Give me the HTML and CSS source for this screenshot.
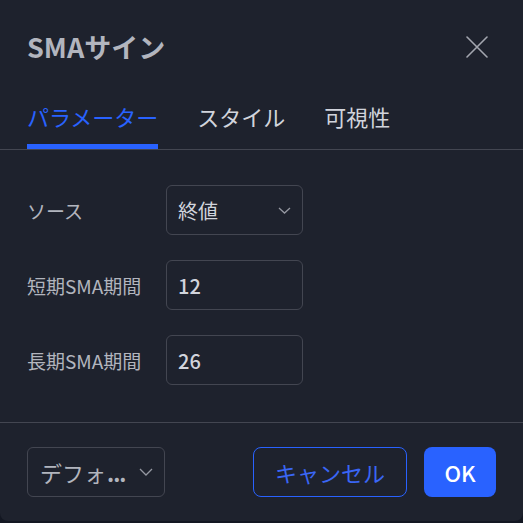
FILE: index.html
```html
<!DOCTYPE html>
<html lang="ja">
<head>
<meta charset="utf-8">
<link rel="stylesheet" href="styles.css">
</head>
<body>
<div class="dialog">
  <div class="header">
    <div class="title">SMAサイン</div>
    <button class="close" aria-label="閉じる">
      <svg width="22" height="22" viewBox="0 0 22 22"><path d="M1 1L21 21M21 1L1 21" stroke="#a3a6af" stroke-width="1.6" fill="none" stroke-linecap="round"/></svg>
    </button>
  </div>
  <div class="tabs">
    <div class="tab active">パラメーター</div>
    <div class="tab">スタイル</div>
    <div class="tab">可視性</div>
  </div>
  <div class="body">
    <div class="row">
      <div class="label">ソース</div>
      <div class="field select">
        <span class="value">終値</span>
        <svg class="chev" width="13" height="7" viewBox="0 0 13 7"><path d="M1 1L6.5 6L12 1" stroke="#9598a1" stroke-width="1.3" fill="none"/></svg>
      </div>
    </div>
    <div class="row">
      <div class="label">短期SMA期間</div>
      <div class="field"><span class="value num">12</span></div>
    </div>
    <div class="row">
      <div class="label">長期SMA期間</div>
      <div class="field"><span class="value num">26</span></div>
    </div>
  </div>
  <div class="footer">
    <div class="preset">
      <span class="preset-text">デフォ<span class="dots">...</span></span>
      <svg class="chev" width="14" height="8" viewBox="0 0 14 8"><path d="M1 1L7 7L13 1" stroke="#9598a1" stroke-width="1.3" fill="none"/></svg>
    </div>
    <div class="actions">
      <button class="btn cancel">キャンセル</button>
      <button class="btn ok">OK</button>
    </div>
  </div>
</div>
</body>
</html>
```
FILE: styles.css
```css
* { box-sizing: border-box; }
html, body { margin: 0; padding: 0; }
body {
  background: #131722;
  width: 523px;
  height: 523px;
  font-family: "Noto Sans CJK JP", "Noto Sans", sans-serif;
}
.dialog {
  width: 523px;
  height: 521px;
  background: #1e222d;
  border-radius: 0 0 8px 8px;
  display: flex;
  flex-direction: column;
}
.header {
  display: flex;
  justify-content: space-between;
  align-items: center;
  height: 46px;
  margin-top: 24px;
  padding: 0 34px 0 27px;
}
.title {
  font-size: 27px;
  font-weight: 700;
  color: #b2b5be;
  line-height: 46px;
}
.close {
  background: none;
  border: 0;
  padding: 0;
  width: 24px;
  height: 24px;
  display: flex;
  align-items: center;
  justify-content: center;
}
.tabs {
  display: flex;
  gap: 39px;
  padding: 0 27px;
  border-bottom: 1px solid #434651;
}
.tab {
  position: relative;
  font-size: 22px;
  line-height: 32px;
  padding: 30px 0 17px;
  color: #d1d4dc;
}
.tab.active { color: #2962ff; }
.tab.active::after {
  content: "";
  position: absolute;
  left: 0;
  right: 0;
  bottom: 0;
  height: 5px;
  background: #2962ff;
}
.body {
  display: flex;
  flex-direction: column;
  gap: 25px;
  padding: 35px 27px 37px;
  border-bottom: 1px solid #434651;
}
.row {
  display: grid;
  grid-template-columns: 139px 137px;
  align-items: center;
  height: 50px;
}
.label {
  font-size: 19px;
  color: #b2b5be;
}
.field {
  height: 50px;
  border: 1px solid #434651;
  border-radius: 6px;
  display: flex;
  align-items: center;
  justify-content: space-between;
  padding: 0 11px 0 11px;
}
.value {
  font-size: 20px;
  color: #d1d4dc;
}
.value.num { font-weight: 500; }
.footer {
  display: flex;
  justify-content: space-between;
  align-items: center;
  padding: 24px 27px 0;
}
.preset {
  width: 138px;
  height: 50px;
  border: 1px solid #434651;
  border-radius: 6px;
  display: flex;
  align-items: center;
  justify-content: space-between;
  padding: 0 11px 0 12px;
}
.preset-text {
  font-size: 22px;
  color: #b2b5be;
}
.dots {
  font-weight: 700;
  letter-spacing: -1px;
  margin-left: 1px;
}
.actions {
  display: flex;
  gap: 17px;
}
.btn {
  height: 50px;
  border-radius: 8px;
  font-family: inherit;
  font-size: 22px;
  padding: 0;
}
.cancel {
  width: 154px;
  background: transparent;
  border: 1px solid #2962ff;
  color: #3a66f5;
}
.ok {
  width: 72px;
  background: #2962ff;
  border: 0;
  color: #ffffff;
  font-weight: 500;
}
```
